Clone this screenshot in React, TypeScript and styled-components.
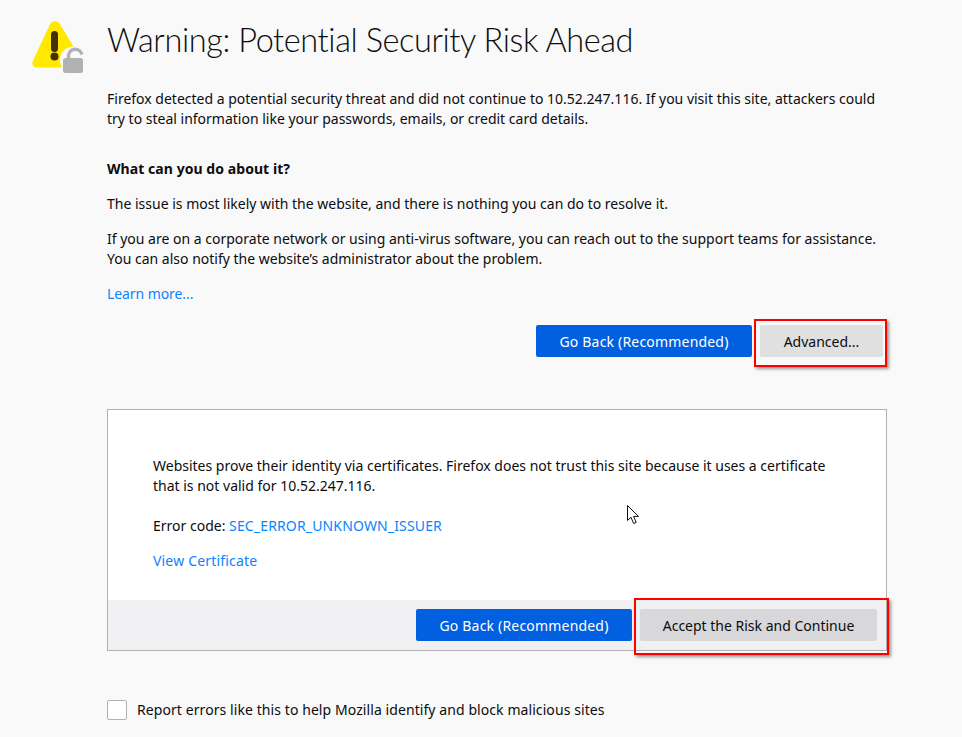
import React from "react";
import styled, { createGlobalStyle } from "styled-components";

const Global = createGlobalStyle`
  html, body { margin: 0; padding: 0; background: #f9f9fa; }
  body { font-family: "Noto Sans", "Open Sans", sans-serif; font-size: 14px; color: #0c0c0d; }
`;

const Page = styled.div`
  position: relative;
  width: 962px;
  height: 737px;
  overflow: hidden;
  display: flex;
  padding-top: 20px;
  box-sizing: border-box;
`;

const IconColumn = styled.div`
  width: 107px;
  flex: none;
  padding-left: 31px;
  box-sizing: border-box;
`;

const Main = styled.main`
  width: 780px;
  flex: none;
`;

const Heading = styled.h1`
  margin: 0 0 29px;
  font-family: "Lato", "Open Sans", sans-serif;
  font-weight: 300;
  font-size: 32.5px;
  line-height: 40px;
  letter-spacing: -0.4px;
  font-variant-ligatures: none;
  color: #0c0c0d;
`;

const Paragraph = styled.p<{ $gap?: number }>`
  margin: 0 0 ${(p) => p.$gap ?? 15}px;
  line-height: 20px;
`;

const Subheading = styled.h2`
  margin: 30px 0 15px;
  font-size: 14px;
  line-height: 20px;
  font-weight: 700;
  letter-spacing: 0.06px;
`;

const Link = styled.a<{ $spacing?: number }>`
  color: #0a84ff;
  text-decoration: none;
  letter-spacing: ${(p) => p.$spacing ?? 0}px;
`;

const Actions = styled.div<{ $inset: number }>`
  display: flex;
  justify-content: flex-end;
  gap: 8px;
  padding-right: ${(p) => p.$inset}px;
`;

const Button = styled.button<{ $primary?: boolean; $width: number; $bg?: string }>`
  width: ${(p) => p.$width}px;
  height: 32px;
  border: 0;
  border-radius: 2px;
  padding: 0;
  font: inherit;
  letter-spacing: ${(p) => (p.$primary ? "0.19px" : "0")};
  background: ${(p) => (p.$primary ? "#0060df" : p.$bg ?? "#e0e0e1")};
  color: ${(p) => (p.$primary ? "#fff" : "#0c0c0d")};
`;

const Highlight = styled.div<{ $x: number; $y: number; $w: number; $h: number }>`
  position: absolute;
  left: ${(p) => p.$x}px;
  top: ${(p) => p.$y}px;
  width: ${(p) => p.$w}px;
  height: ${(p) => p.$h}px;
  box-sizing: border-box;
  border: 2px solid #ff0000;
  box-shadow: 2px 2px 3px rgba(0, 0, 0, 0.4);
  pointer-events: none;
`;

const TopActions = styled.div`
  margin-top: 21px;
`;

const Details = styled.section`
  margin-top: 52px;
  height: 242px;
  box-sizing: border-box;
  border: 1px solid #b1b1b3;
  background: #fff;
  display: flex;
  flex-direction: column;
`;

const DetailsBody = styled.div`
  flex: 1;
  padding: 46px 45px 0;
`;

const DetailsFooter = styled.div`
  height: 50px;
  box-sizing: border-box;
  padding-top: 9px;
  background: #f0f0f2;
`;

const ReportRow = styled.label`
  margin-top: 48px;
  display: flex;
  align-items: center;
  gap: 10px;
  line-height: 20px;
`;

const ReportText = styled.span`
  padding-top: 1px;
  letter-spacing: 0.08px;
`;

const Checkbox = styled.span`
  width: 20px;
  height: 20px;
  box-sizing: border-box;
  border: 1px solid #b1b1b3;
  border-radius: 2px;
  background: #fff;
`;

const Cursor = styled.svg`
  position: absolute;
  left: 627px;
  top: 505px;
`;

const WarningIcon = () => (
  <svg width="54" height="54" viewBox="0 0 54 54" style={{ display: "block" }}>
    <path
      d="M19.5 3.5C21.8 0 26.2 0 28.5 3.5L44 29L33 47.5H6C2 47.5 0.4 44 2 40.5Z"
      fill="#ffe900"
    />
    <rect x="20" y="11" width="7" height="21" rx="3.5" fill="#45300a" />
    <circle cx="23.5" cy="36.5" r="4" fill="#45300a" />
    <circle cx="42.5" cy="40" r="13.5" fill="#f9f9fa" />
    <rect x="29" y="47.5" width="8" height="6.5" fill="#f9f9fa" />
    <path
      d="M37.5 40v-4.5a6.8 6.8 0 0 1 13.4 -1"
      fill="none"
      stroke="#b1b1b3"
      strokeWidth="3.4"
    />
    <rect x="32" y="38" width="20" height="15" rx="2.5" fill="#b1b1b3" />
  </svg>
);

export default function App() {
  return (
    <>
      <Global />
      <Page>
        <IconColumn>
          <WarningIcon />
        </IconColumn>
        <Main>
          <Heading>Warning: Potential Security Risk Ahead</Heading>
          <Paragraph $gap={0}>
            Firefox detected a potential security threat and did not continue to 10.52.247.116. If you visit this site, attackers could
            <br />
            try to steal information like your passwords, emails, or credit card details.
          </Paragraph>
          <Subheading>What can you do about it?</Subheading>
          <Paragraph>The issue is most likely with the website, and there is nothing you can do to resolve it.</Paragraph>
          <Paragraph>
            If you are on a corporate network or using anti-virus software, you can reach out to the support teams for assistance.
            <br />
            You can also notify the website’s administrator about the problem.
          </Paragraph>
          <Paragraph $gap={0}>
            <Link href="#" $spacing={-0.08}>Learn more...</Link>
          </Paragraph>
          <TopActions>
            <Actions $inset={4}>
              <Button $primary $width={216}>Go Back (Recommended)</Button>
              <Button $width={123}>Advanced...</Button>
            </Actions>
          </TopActions>
          <Details>
            <DetailsBody>
              <Paragraph $gap={20}>
                Websites prove their identity via certificates. Firefox does not trust this site because it uses a certificate
                <br />
                that is not valid for 10.52.247.116.
              </Paragraph>
              <Paragraph>
                Error code: <Link href="#" $spacing={0.15}>SEC_ERROR_UNKNOWN_ISSUER</Link>
              </Paragraph>
              <Paragraph $gap={0}>
                <Link href="#" $spacing={0.18}>View Certificate</Link>
              </Paragraph>
            </DetailsBody>
            <DetailsFooter>
              <Actions $inset={9}>
                <Button $primary $width={216}>Go Back (Recommended)</Button>
                <Button $width={237} $bg="#d8d8da">Accept the Risk and Continue</Button>
              </Actions>
            </DetailsFooter>
          </Details>
          <ReportRow>
            <Checkbox />
            <ReportText>Report errors like this to help Mozilla identify and block malicious sites</ReportText>
          </ReportRow>
        </Main>
        <Highlight $x={754} $y={319} $w={133} $h={48} />
        <Highlight $x={634} $y={598} $w={255} $h={57} />
        <Cursor width="13" height="20" viewBox="0 0 13 20">
          <path
            d="M0.5 0.5V15.5L4 12.2L6.6 18.5L9.2 17.4L6.6 11.4H11.5Z"
            fill="#fff"
            stroke="#111"
            strokeWidth="1"
            strokeLinejoin="miter"
          />
        </Cursor>
      </Page>
    </>
  );
}
